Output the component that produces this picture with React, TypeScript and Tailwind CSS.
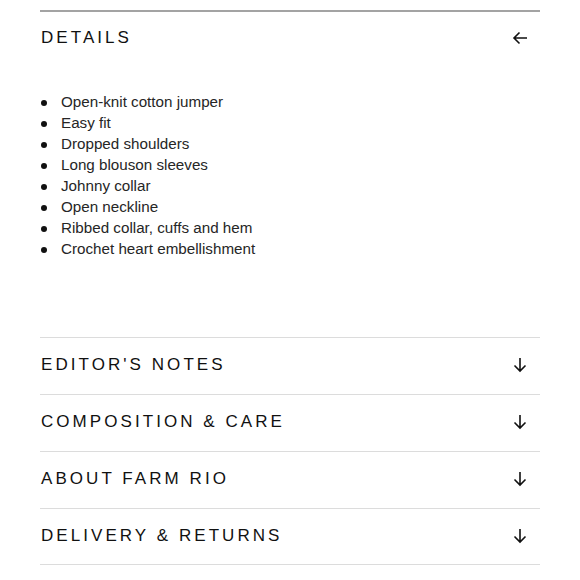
import React from "react";

const details = [
  "Open-knit cotton jumper",
  "Easy fit",
  "Dropped shoulders",
  "Long blouson sleeves",
  "Johnny collar",
  "Open neckline",
  "Ribbed collar, cuffs and hem",
  "Crochet heart embellishment",
];

const sections = [
  "EDITOR'S NOTES",
  "COMPOSITION & CARE",
  "ABOUT FARM RIO",
  "DELIVERY & RETURNS",
];

function ArrowLeft() {
  return (
    <svg width="16" height="16" viewBox="0 0 16 16" fill="none" stroke="#111" strokeWidth="1.6">
      <path d="M15 8H2M7.5 2.5L2 8l5.5 5.5" />
    </svg>
  );
}

function ArrowDown() {
  return (
    <svg width="16" height="16" viewBox="0 0 16 16" fill="none" stroke="#111" strokeWidth="1.6">
      <path d="M8 1v13M2.5 8.5L8 14l5.5-5.5" />
    </svg>
  );
}

export default function App() {
  return (
    <div className="min-h-screen bg-white px-[40px] pt-[10px]" style={{ fontFamily: '"Liberation Sans", Arial, sans-serif' }}>
      <div className="border-t-2 border-[#a3a3a3]">
        <div className="flex items-center justify-between h-[52px]">
          <h2 className="text-[17px] tracking-[0.18em] text-[#111] pl-[1px]">DETAILS</h2>
          <span className="mr-[12px]">
            <ArrowLeft />
          </span>
        </div>
        <ul className="pt-[28px] pb-[77px]">
          {details.map((d) => (
            <li key={d} className="flex items-center h-[21px] text-[15.2px] text-[#262626]">
              <span className="w-[6px] h-[6px] rounded-full bg-[#111] ml-[1px] mr-[14px]" />
              {d}
            </li>
          ))}
        </ul>
      </div>
      {sections.map((s) => (
        <div key={s} className="flex items-center justify-between h-[57px] border-t border-[#dcdcdc] last:border-b">
          <h2 className="text-[17px] tracking-[0.18em] text-[#111] pl-[1px] pb-[2px]">{s}</h2>
          <span className="mr-[12px] pb-[2px]">
            <ArrowDown />
          </span>
        </div>
      ))}
    </div>
  );
}
